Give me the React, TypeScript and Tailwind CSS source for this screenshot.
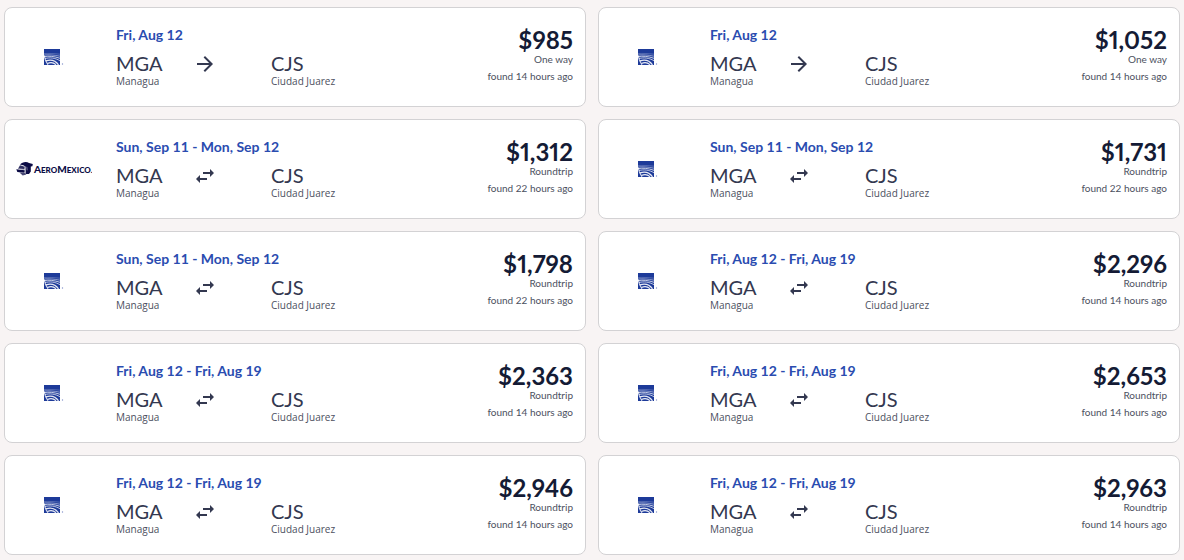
import React from 'react';
import { MdArrowForward, MdSwapHoriz } from 'react-icons/md';

interface Flight {
  id: number;
  airline: 'united' | 'aeromexico';
  dates: string;
  price: number;
  roundtrip: boolean;
  foundHours: number;
}

const flights: Flight[] = [
  { id: 1, airline: 'united', dates: 'Fri, Aug 12', price: 985, roundtrip: false, foundHours: 14 },
  { id: 2, airline: 'united', dates: 'Fri, Aug 12', price: 1052, roundtrip: false, foundHours: 14 },
  { id: 3, airline: 'aeromexico', dates: 'Sun, Sep 11 - Mon, Sep 12', price: 1312, roundtrip: true, foundHours: 22 },
  { id: 4, airline: 'united', dates: 'Sun, Sep 11 - Mon, Sep 12', price: 1731, roundtrip: true, foundHours: 22 },
  { id: 5, airline: 'united', dates: 'Sun, Sep 11 - Mon, Sep 12', price: 1798, roundtrip: true, foundHours: 22 },
  { id: 6, airline: 'united', dates: 'Fri, Aug 12 - Fri, Aug 19', price: 2296, roundtrip: true, foundHours: 14 },
  { id: 7, airline: 'united', dates: 'Fri, Aug 12 - Fri, Aug 19', price: 2363, roundtrip: true, foundHours: 14 },
  { id: 8, airline: 'united', dates: 'Fri, Aug 12 - Fri, Aug 19', price: 2653, roundtrip: true, foundHours: 14 },
  { id: 9, airline: 'united', dates: 'Fri, Aug 12 - Fri, Aug 19', price: 2946, roundtrip: true, foundHours: 14 },
  { id: 10, airline: 'united', dates: 'Fri, Aug 12 - Fri, Aug 19', price: 2963, roundtrip: true, foundHours: 14 },
];

function UnitedLogo() {
  return (
    <svg width="20" height="16" viewBox="0 0 20 16" aria-label="United">
      <path d="M0 0h16v16H0z" fill="#1d3a99" />
      <g fill="none" stroke="#fff">
        <path d="M0 4.500c5-.2 10 0 16 .7" strokeWidth=".6" opacity=".4" />
        <path d="M0 6c5-.4 10 0 16 1.200" strokeWidth=".9" opacity=".55" />
        <path d="M0 7.600c5-.8 10-.3 16 1.700" strokeWidth="1" opacity=".75" />
        <path d="M1 9.500c5-1.200 10-.6 15 2.200" strokeWidth="1" opacity=".7" />
        <path d="M2 11.800c4.500-1.400 9-1 12.500 4" strokeWidth="1.300" opacity=".9" />
        <path d="M3.500 14.500c3-1.400 6-1 8.500 1.200" strokeWidth="1.200" opacity=".9" />
        <path d="M.3 6.500c.3 3.500 1.500 6.500 3.700 9.300" strokeWidth="1.100" opacity=".8" />
      </g>
      <circle cx="18.500" cy="15" r=".7" fill="#8795cb" />
    </svg>
  );
}

function AeromexicoLogo() {
  return (
    <svg width="76" height="16" viewBox="0 0 76 16" className="shrink-0" aria-label="Aeromexico">
      <g fill="#0b0b45">
        <path d="M4 3.600C6 1 10.500.3 13 2l3.800 1-.4 2.200-1.600.3v5l-1.800 2.500H9.400V6.200L8 4.600z" />
        <path d="M4 4.300l4.800 1.400-.4 3.100L2 7.800z" opacity=".85" />
        <path d="M.3 8.200l8.600 1-.4 2.500-7.200-.8z" />
        <path d="M3.500 11.500l5.400.5 1.500 1.400-3.700 1z" opacity=".75" />
      </g>
      <path d="M2.600 7.600l6 1M9.200 5l.2 7.500M10.800 5.800l.4 3.500" stroke="#fff" strokeWidth=".6" opacity=".7" />
      <text x="18" y="12" fill="#0b0b45" fontFamily="Lato, sans-serif" fontWeight="900" fontSize="10">
        A<tspan fontSize="8">ERO</tspan>M<tspan fontSize="8">EXICO.</tspan>
      </text>
    </svg>
  );
}

function Airport({ code, city }: { code: string; city: string }) {
  return (
    <div>
      <p className="text-xl leading-[22px] text-[#333850]">{code}</p>
      <p className="font-['Open_Sans',sans-serif] text-[10px] leading-[14px] text-[#4c5060]">{city}</p>
    </div>
  );
}

function FlightCard({ flight }: { flight: Flight }) {
  const DirectionIcon = flight.roundtrip ? MdSwapHoriz : MdArrowForward;

  return (
    <a
      href={`#flight-${flight.id}`}
      className="flex items-start rounded-lg border border-[#d3d2d4] bg-white px-3 py-[17px] hover:shadow-md"
    >
      <div className="mr-[25px] flex w-[74px] shrink-0 items-center justify-center self-center">
        {flight.airline === 'united' ? <UnitedLogo /> : <AeromexicoLogo />}
      </div>
      <div className="flex-1 pb-px">
        <p className="mb-[7px] text-sm leading-5 font-bold text-[#2a4cb0]">{flight.dates}</p>
        <div className="grid grid-cols-[77px_78px_auto]">
          <Airport code="MGA" city="Managua" />
          <DirectionIcon className="h-6 w-6 text-[#333850]" aria-hidden="true" />
          <Airport code="CJS" city="Ciudad Juarez" />
        </div>
      </div>
      <div className="flex flex-col gap-0.5 pt-[3px] text-right text-[10px] leading-[15px] text-[#4c5060]">
        <div>
          <p className="text-2xl leading-6 font-bold text-[#141b35] proportional-nums">
            ${flight.price.toLocaleString('en-US')}
          </p>
          <p>{flight.roundtrip ? 'Roundtrip' : 'One way'}</p>
        </div>
        <p>found {flight.foundHours} hours ago</p>
      </div>
    </a>
  );
}

export default function App() {
  return (
    <main className="min-h-screen bg-[#f8f4f4] px-1 pt-[7px] pb-1 font-[Lato,sans-serif]">
      <div className="grid grid-cols-2 gap-3">
        {flights.map((flight) => (
          <FlightCard key={flight.id} flight={flight} />
        ))}
      </div>
    </main>
  );
}
